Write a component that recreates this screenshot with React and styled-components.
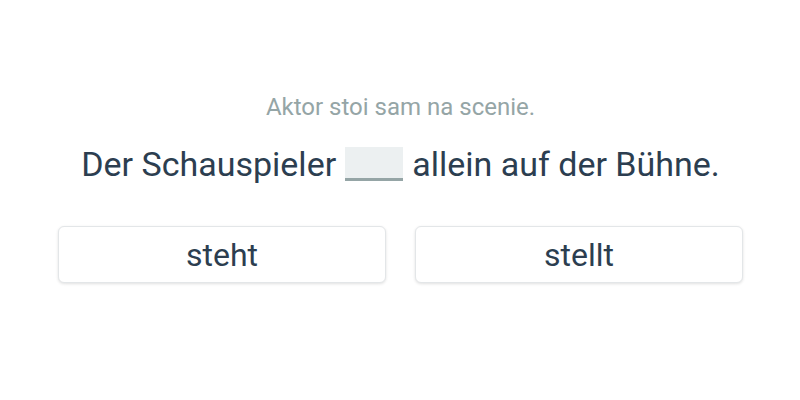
import React from "react";
import styled, { createGlobalStyle } from "styled-components";

const GlobalStyle = createGlobalStyle`
  html, body {
    margin: 0;
    padding: 0;
    background: #ffffff;
  }
  body {
    font-family: Roboto, "Noto Sans", sans-serif;
  }
`;

const Page = styled.div`
  width: 800px;
  height: 400px;
  box-sizing: border-box;
  padding: 93px 57px 0 58px;
  display: flex;
  flex-direction: column;
  align-items: center;
`;

const Hint = styled.div`
  font-size: 24px;
  line-height: 28px;
  color: #95a5a6;
`;

const Sentence = styled.div`
  margin-top: 23px;
  font-size: 34px;
  line-height: 40px;
  color: #2c3e50;
  display: flex;
  align-items: center;
  gap: 9px;
`;

const Blank = styled.span`
  display: inline-block;
  width: 58px;
  height: 31px;
  background: #ecf0f1;
  border-bottom: 3px solid #95a5a6;
`;

const Choices = styled.div`
  margin-top: 42px;
  width: 100%;
  display: grid;
  grid-template-columns: 1fr 1fr;
  gap: 29px;
`;

const Choice = styled.button`
  height: 57px;
  background: #ffffff;
  border: 1px solid #e3e6e8;
  border-radius: 6px;
  box-shadow: 0 1px 3px rgba(0, 0, 0, 0.12);
  font-family: Roboto, "Noto Sans", sans-serif;
  font-size: 32px;
  color: #2c3e50;
  cursor: pointer;
  padding: 0;
`;

export default function App() {
  return (
    <>
      <GlobalStyle />
      <Page>
        <Hint>Aktor stoi sam na scenie.</Hint>
        <Sentence>
          <span>Der Schauspieler</span>
          <Blank />
          <span>allein auf der Bühne.</span>
        </Sentence>
        <Choices>
          <Choice>steht</Choice>
          <Choice>stellt</Choice>
        </Choices>
      </Page>
    </>
  );
}
